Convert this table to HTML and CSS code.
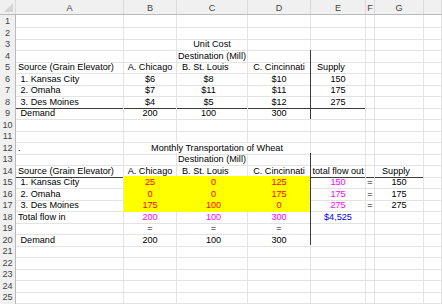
FILE: index.html
```html
<!DOCTYPE html>
<html>
<head>
<meta charset="utf-8">
<link rel="stylesheet" href="styles.css">
</head>
<body>
<div class="sheet">
  <div class="row hdr">
    <div class="corner"><svg width="9" height="9" viewBox="0 0 9 9"><polygon points="9,0 9,9 0,9" fill="#d4d4d4"/></svg></div>
    <div class="ch">A</div><div class="ch">B</div><div class="ch">C</div><div class="ch">D</div><div class="ch">E</div><div class="ch">F</div><div class="ch">G</div><div class="ch"></div>
  </div>
  <div class="row"><div class="rh">1</div><div class="c"></div><div class="c"></div><div class="c"></div><div class="c"></div><div class="c"></div><div class="c"></div><div class="c"></div><div class="c"></div></div>
  <div class="row"><div class="rh">2</div><div class="c"></div><div class="c"></div><div class="c"></div><div class="c"></div><div class="c"></div><div class="c"></div><div class="c"></div><div class="c"></div></div>
  <div class="row"><div class="rh">3</div><div class="c"></div><div class="c"></div><div class="c ctr">Unit Cost</div><div class="c"></div><div class="c"></div><div class="c"></div><div class="c"></div><div class="c"></div></div>
  <div class="row"><div class="rh">4</div><div class="c"></div><div class="c"></div><div class="c ctr">Destination (Mill)</div><div class="c vb"></div><div class="c"></div><div class="c"></div><div class="c"></div><div class="c"></div></div>
  <div class="row"><div class="rh">5</div><div class="c l">Source (Grain Elevator)</div><div class="c ctr">A. Chicago</div><div class="c pl5">B. St. Louis</div><div class="c ctr vb">C. Cincinnati</div><div class="c pl6">Supply</div><div class="c"></div><div class="c"></div><div class="c"></div></div>
  <div class="row"><div class="rh">6</div><div class="c in">1. Kansas City</div><div class="c ctr">$6</div><div class="c ctr c1">$8</div><div class="c ctr vb">$10</div><div class="c ctr">150</div><div class="c"></div><div class="c"></div><div class="c"></div></div>
  <div class="row"><div class="rh">7</div><div class="c in">2. Omaha</div><div class="c ctr">$7</div><div class="c ctr c1">$11</div><div class="c ctr vb">$11</div><div class="c ctr">175</div><div class="c"></div><div class="c"></div><div class="c"></div></div>
  <div class="row"><div class="rh">8</div><div class="c in hb">3. Des Moines</div><div class="c ctr hb">$4</div><div class="c ctr c1 hb">$5</div><div class="c ctr vb hb">$12</div><div class="c ctr hb">275</div><div class="c"></div><div class="c"></div><div class="c"></div></div>
  <div class="row"><div class="rh">9</div><div class="c in">Demand</div><div class="c ctr">200</div><div class="c ctr c1">100</div><div class="c ctr vb">300</div><div class="c"></div><div class="c"></div><div class="c"></div><div class="c"></div></div>
  <div class="row"><div class="rh">10</div><div class="c"></div><div class="c"></div><div class="c"></div><div class="c"></div><div class="c"></div><div class="c"></div><div class="c"></div><div class="c"></div></div>
  <div class="row"><div class="rh">11</div><div class="c"></div><div class="c"></div><div class="c"></div><div class="c"></div><div class="c"></div><div class="c"></div><div class="c"></div><div class="c"></div></div>
  <div class="row"><div class="rh">12</div><div class="c l">.</div><div class="c ctr span3">Monthly Transportation of Wheat</div><div class="c"></div><div class="c"></div><div class="c"></div><div class="c"></div></div>
  <div class="row"><div class="rh">13</div><div class="c"></div><div class="c"></div><div class="c ctr">Destination (Mill)</div><div class="c vb"></div><div class="c"></div><div class="c"></div><div class="c"></div><div class="c"></div></div>
  <div class="row"><div class="rh">14</div><div class="c l hb">Source (Grain Elevator)</div><div class="c ctr hb">A. Chicago</div><div class="c pl5 hb">B. St. Louis</div><div class="c ctr vb hb">C. Cincinnati</div><div class="c pl1 hb">total flow out</div><div class="c hb"></div><div class="c pl7 hb">Supply</div><div class="c"></div></div>
  <div class="row"><div class="rh">15</div><div class="c in">1. Kansas City</div><div class="c ctr y red">25</div><div class="c ctr c2 y red">0</div><div class="c ctr vb y red">125</div><div class="c ctr mag">150</div><div class="c ctr">=</div><div class="c ctr">150</div><div class="c"></div></div>
  <div class="row"><div class="rh">16</div><div class="c in">2. Omaha</div><div class="c ctr y red">0</div><div class="c ctr c2 y red">0</div><div class="c ctr vb y red">175</div><div class="c ctr mag">175</div><div class="c ctr">=</div><div class="c ctr">175</div><div class="c"></div></div>
  <div class="row"><div class="rh">17</div><div class="c in">3. Des Moines</div><div class="c ctr y red">175</div><div class="c ctr c2 y red">100</div><div class="c ctr vb y red">0</div><div class="c ctr mag">275</div><div class="c ctr">=</div><div class="c ctr">275</div><div class="c"></div></div>
  <div class="row"><div class="rh">18</div><div class="c l">Total flow in</div><div class="c ctr mag">200</div><div class="c ctr c2 mag">100</div><div class="c ctr vb mag">300</div><div class="c ctr blue">$4,525</div><div class="c"></div><div class="c"></div><div class="c"></div></div>
  <div class="row"><div class="rh">19</div><div class="c"></div><div class="c ctr">=</div><div class="c ctr c2">=</div><div class="c ctr vb">=</div><div class="c"></div><div class="c"></div><div class="c"></div><div class="c"></div></div>
  <div class="row"><div class="rh">20</div><div class="c in">Demand</div><div class="c ctr">200</div><div class="c ctr c2">100</div><div class="c ctr vb">300</div><div class="c"></div><div class="c"></div><div class="c"></div><div class="c"></div></div>
  <div class="row"><div class="rh">21</div><div class="c"></div><div class="c"></div><div class="c"></div><div class="c"></div><div class="c"></div><div class="c"></div><div class="c"></div><div class="c"></div></div>
  <div class="row"><div class="rh">22</div><div class="c"></div><div class="c"></div><div class="c"></div><div class="c"></div><div class="c"></div><div class="c"></div><div class="c"></div><div class="c"></div></div>
  <div class="row"><div class="rh">23</div><div class="c"></div><div class="c"></div><div class="c"></div><div class="c"></div><div class="c"></div><div class="c"></div><div class="c"></div><div class="c"></div></div>
  <div class="row"><div class="rh">24</div><div class="c"></div><div class="c"></div><div class="c"></div><div class="c"></div><div class="c"></div><div class="c"></div><div class="c"></div><div class="c"></div></div>
  <div class="row"><div class="rh">25</div><div class="c"></div><div class="c"></div><div class="c"></div><div class="c"></div><div class="c"></div><div class="c"></div><div class="c"></div><div class="c"></div></div>
  <div class="row"><div class="rh"></div><div class="c"></div><div class="c"></div><div class="c"></div><div class="c"></div><div class="c"></div><div class="c"></div><div class="c"></div><div class="c"></div></div>
</div>
</body>
</html>
```
FILE: styles.css
```css
html, body {
  margin: 0;
  padding: 0;
  background: #ffffff;
  overflow: hidden;
}
.sheet {
  width: 442px;
  height: 304px;
  overflow: hidden;
  font-family: "Liberation Sans", Arial, sans-serif;
  font-size: 9.15px;
  color: #000;
}
.row {
  display: grid;
  grid-template-columns: 16px 108px 53px 71px 63px 55px 9px 49px 1fr;
  height: 11.5px;
}
.row.hdr {
  height: 15px;
  background: #f0f0f0;
  border-bottom: 1px solid #b9b9b9;
  box-sizing: border-box;
}
.corner {
  display: flex;
  align-items: flex-end;
  justify-content: flex-end;
  padding: 0 2px 2px 0;
  border-right: 1px solid #d8d8d8;
}
.ch {
  text-align: center;
  color: #444;
  line-height: 12px;
  padding-top: 2px;
  border-right: 1px solid #dadada;
  box-sizing: border-box;
}
.rh {
  background: #f0f0f0;
  color: #444;
  text-align: center;
  border-right: 1px solid #b9b9b9;
  border-bottom: 1px solid #e2e2e2;
  box-sizing: border-box;
  padding-top: 1px;
  line-height: 11px;
}
.c {
  box-sizing: border-box;
  border-right: 1px solid #e3e3e3;
  border-bottom: 1px solid #e3e3e3;
  padding-top: 1px;
  line-height: 11px;
  white-space: nowrap;
  min-width: 0;
}
.l { padding-left: 2px; }
.in { padding-left: 4.5px; }
.pl1 { padding-left: 1.5px; }
.pl5 { padding-left: 5px; }
.pl6 { padding-left: 6px; }
.pl7 { padding-left: 7px; }
.ctr { text-align: center; }
.c1 { padding-right: 7px; }
.c2 { padding-left: 3px; }
.span3 { grid-column: span 3; padding-left: 0; }
.y {
  background: #ffff00;
  border-right-color: #ffff00;
  border-bottom-color: #ffff00;
}
.vb { border-right: 1px solid #3c3c3c; }
.hb { border-bottom: 1px solid #3c3c3c; }
.red { color: #ff0000; }
.mag { color: #ff00ff; }
.blue { color: #0000ff; }
```
